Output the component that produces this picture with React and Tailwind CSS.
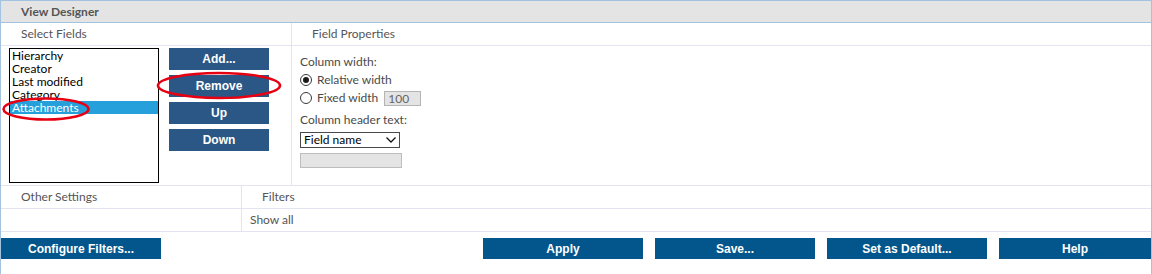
import React from "react";

const items = ["Hierarchy", "Creator", "Last modified", "Category", "Attachments"];

function SideButton({ children }) {
  return (
    <div className="h-[22px] w-[100px] bg-[#2a5785] text-white font-bold text-[12px] font-['Liberation_Sans',Arial,sans-serif] flex items-center justify-center">
      {children}
    </div>
  );
}

function BottomButton({ children, w = "w-[160px]" }) {
  return (
    <div className={`${w} h-[21px] bg-[#02568c] text-white font-bold text-[12px] font-['Liberation_Sans',Arial,sans-serif] flex items-center justify-center`}>
      {children}
    </div>
  );
}

function Radio({ checked }) {
  return (
    <div className="shrink-0 mr-[5px] w-[12px] h-[12px] rounded-full border border-[#3a3a3a] bg-white flex items-center justify-center">
      {checked && <div className="w-[6px] h-[6px] rounded-full bg-[#1a1a1a]" />}
    </div>
  );
}

export default function App() {
  return (
    <div className="relative w-[1152px] h-[274px] bg-white border-l border-r border-t border-[#a3c2e0] font-['Lato',sans-serif] text-[12px] text-[#555]">
      <div className="h-[22px] bg-[#e4e4e4] border-b border-[#a3c2e0] flex items-center pl-[20px] font-bold text-[#555]">
        View Designer
      </div>

      <div className="flex h-[163px] border-b border-[#e2e5f1]">
        <div className="w-[290px] flex flex-col">
          <div className="h-[23px] border-b border-[#e2e5f1] flex items-center pl-[20px]">Select Fields</div>
          <div className="flex pl-[8px] pt-[2px] gap-[10px]">
            <div className="w-[150px] h-[135px] border border-black bg-white text-black">
              {items.map((it) =>
                it === "Attachments" ? (
                  <div key={it} className="h-[13px] leading-[13px] pl-[2px] bg-[#26a0da] text-white">{it}</div>
                ) : (
                  <div key={it} className="h-[13px] leading-[13px] pl-[2px]">{it}</div>
                )
              )}
            </div>
            <div className="flex flex-col gap-[5px]">
              <SideButton>Add...</SideButton>
              <SideButton>Remove</SideButton>
              <SideButton>Up</SideButton>
              <SideButton>Down</SideButton>
            </div>
          </div>
        </div>
        <div className="flex-1 border-l border-[#e2e5f1] flex flex-col">
          <div className="h-[23px] border-b border-[#e2e5f1] flex items-center pl-[20px]">Field Properties</div>
          <div className="pl-[8px] pt-[7px] text-[#4a4a4a] flex flex-col">
            <div className="h-[18px] flex items-center whitespace-nowrap">Column width:</div>
            <div className="h-[18px] flex items-center whitespace-nowrap">
              <Radio checked />
              <span>Relative width</span>
            </div>
            <div className="h-[18px] flex items-center whitespace-nowrap">
              <Radio />
              <span className="shrink-0 whitespace-nowrap">Fixed width</span>
              <div className="shrink-0 ml-[6px] w-[37px] h-[15px] bg-[#e4e4e4] border border-[#b4b4b4] text-[#666] pl-[3px] leading-[13px]">100</div>
            </div>
            <div className="h-[18px] flex items-center mt-[4px] whitespace-nowrap">Column header text:</div>
            <div className="mt-[3px] w-[100px] h-[16px] border border-[#4a4a4a] bg-white flex items-center justify-between pl-[3px] pr-[3px] text-black">
              <span className="leading-[14px] whitespace-nowrap">Field name</span>
              <svg width="10" height="6" viewBox="0 0 10 6" fill="none">
                <path d="M0.5 0.5 L5 5 L9.5 0.5" stroke="#111" strokeWidth="1.3" />
              </svg>
            </div>
            <div className="mt-[5px] w-[102px] h-[15px] bg-[#e4e4e4] border border-[#bdbdbd]" />
          </div>
        </div>
      </div>

      <div className="flex h-[46px]">
        <div className="w-[240px] flex flex-col">
          <div className="h-[23px] border-b border-[#e2e5f1] flex items-center pl-[20px]">Other Settings</div>
          <div className="h-[23px] border-b border-[#e2e5f1]" />
        </div>
        <div className="flex-1 border-l border-[#e2e5f1] flex flex-col">
          <div className="h-[23px] border-b border-[#e2e5f1] flex items-center pl-[20px]">Filters</div>
          <div className="h-[23px] border-b border-[#e2e5f1] flex items-center pl-[8px]">Show all</div>
        </div>
      </div>

      <div className="mt-[6px] flex justify-between">
        <BottomButton>Configure Filters...</BottomButton>
        <div className="flex gap-[12px]">
          <BottomButton>Apply</BottomButton>
          <BottomButton>Save...</BottomButton>
          <BottomButton>Set as Default...</BottomButton>
          <BottomButton w="w-[152px]">Help</BottomButton>
        </div>
      </div>

      <svg className="absolute left-[-1px] top-[-1px] pointer-events-none" width="1152" height="274">
        <ellipse cx="219" cy="85.5" rx="61" ry="12.5" fill="none" stroke="#e60012" strokeWidth="2.6" />
        <ellipse cx="46" cy="109" rx="42.5" ry="10.5" fill="none" stroke="#e60012" strokeWidth="2.6" />
      </svg>
    </div>
  );
}
